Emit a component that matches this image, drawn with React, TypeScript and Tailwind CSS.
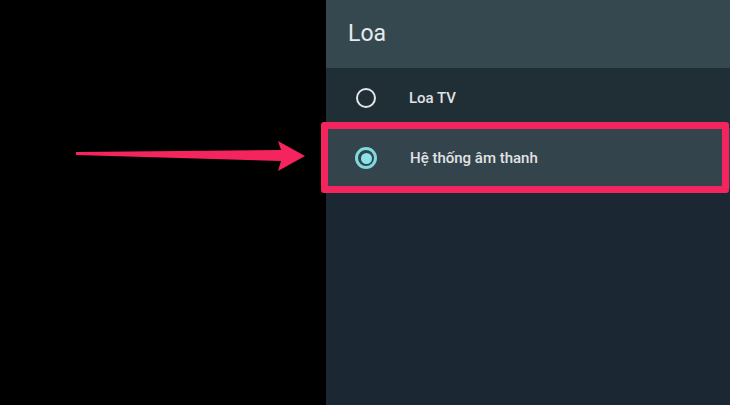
export default function App() {
  return (
    <main
      className="relative flex h-[405px] w-[730px] overflow-hidden bg-black"
      style={{ fontFamily: "Roboto, 'Noto Sans', sans-serif" }}
    >
      <div className="w-[326px] shrink-0 bg-black" />

      <section className="flex flex-1 flex-col bg-[#1b2833]">
        <header className="flex h-[68px] items-center bg-[#35484f] pl-[22px]">
          <h1 className="text-[23px] font-normal text-[#e6eaec]">Loa</h1>
        </header>

        <div className="flex h-[60px] items-center bg-[#202e35] pl-[30px]">
          <span className="h-[20px] w-[20px] rounded-full border-2 border-[#e4e6e8]" />
          <span className="ml-[33px] text-[15px] font-medium text-[#e0e3e5]">
            Loa TV
          </span>
        </div>

        <div className="flex h-[60px] items-center bg-[#34444c] pl-[29px]">
          <span className="flex h-[22px] w-[22px] items-center justify-center rounded-full border-[3px] border-[#7fd9df]">
            <span className="h-[11px] w-[11px] rounded-full bg-[#8be3e8]" />
          </span>
          <span className="ml-[33px] text-[15px] font-medium text-[#e0e3e5]">
            Hệ thống âm thanh
          </span>
        </div>

        <div className="flex-1 bg-[#1b2833]" />
      </section>

      {/* highlight frame */}
      <div className="absolute left-[321px] top-[122px] h-[71px] w-[408px] rounded-[3px] border-[7px] border-[#f3245e]" />

      {/* arrow */}
      <svg
        className="absolute left-0 top-0"
        width="730"
        height="405"
        viewBox="0 0 730 405"
      >
        <polygon
          points="76,152 281,150 278,141 305,156 278,171 281,161 76,155"
          fill="#f3245e"
        />
      </svg>
    </main>
  );
}
